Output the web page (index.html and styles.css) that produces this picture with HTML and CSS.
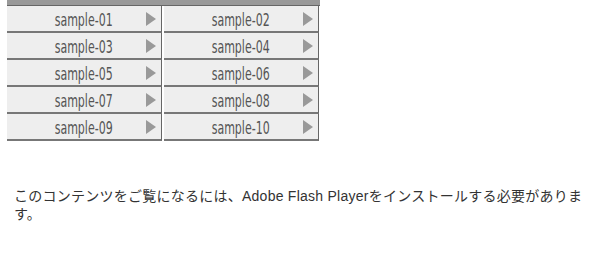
FILE: index.html
```html
<!DOCTYPE html>
<html lang="ja">
<head>
  <meta charset="UTF-8">
  <meta name="viewport" content="width=device-width, initial-scale=1.0">
  <title>samples</title>
  <link rel="stylesheet" href="styles.css">
</head>
<body>

  <div id="sampleMenu">
    <div class="topbar"></div>
    <div class="list">
      <a class="item" href="#"><span class="label">sample-01</span><span class="arrow"></span></a>
      <a class="item" href="#"><span class="label">sample-02</span><span class="arrow"></span></a>
      <a class="item" href="#"><span class="label">sample-03</span><span class="arrow"></span></a>
      <a class="item" href="#"><span class="label">sample-04</span><span class="arrow"></span></a>
      <a class="item" href="#"><span class="label">sample-05</span><span class="arrow"></span></a>
      <a class="item" href="#"><span class="label">sample-06</span><span class="arrow"></span></a>
      <a class="item" href="#"><span class="label">sample-07</span><span class="arrow"></span></a>
      <a class="item" href="#"><span class="label">sample-08</span><span class="arrow"></span></a>
      <a class="item" href="#"><span class="label">sample-09</span><span class="arrow"></span></a>
      <a class="item" href="#"><span class="label">sample-10</span><span class="arrow"></span></a>
    </div>
  </div>

  <p class="notice">このコンテンツをご覧になるには、Adobe Flash Playerをインストールする必要があります。</p>

</body>
</html>
```

FILE: styles.css
```css
body {
  margin: 0;
  padding: 0 0 0 7px;
  background: #fff;
}

#sampleMenu {
  width: 313px;
}

.topbar {
  height: 5px;
  background: #999;
  border-bottom: 1px solid #666;
}

.list {
  display: grid;
  grid-template-columns: 155px 155px;
  column-gap: 2px;
}

.item {
  position: relative;
  display: flex;
  align-items: center;
  justify-content: center;
  height: 25px;
  background: #eee;
  border-right: 1px solid #666;
  border-bottom: 2px solid #777;
  text-decoration: none;
}

.label {
  display: inline-block;
  padding-top: 2px;
  font-family: "DejaVu Sans", sans-serif;
  font-stretch: condensed;
  font-size: 18px;
  color: #555;
  transform: scaleX(0.68);
}

.arrow {
  position: absolute;
  right: 5px;
  top: 6px;
  width: 0;
  height: 0;
  border-top: 7px solid transparent;
  border-bottom: 7px solid transparent;
  border-left: 10px solid #999;
}

.notice {
  margin: 46px 0 0 7px;
  padding-right: 14px;
  font-family: "Liberation Sans", "Noto Sans CJK JP", sans-serif;
  font-size: 14px;
  line-height: 18px;
  letter-spacing: 0.25px;
  color: #333;
}
```
